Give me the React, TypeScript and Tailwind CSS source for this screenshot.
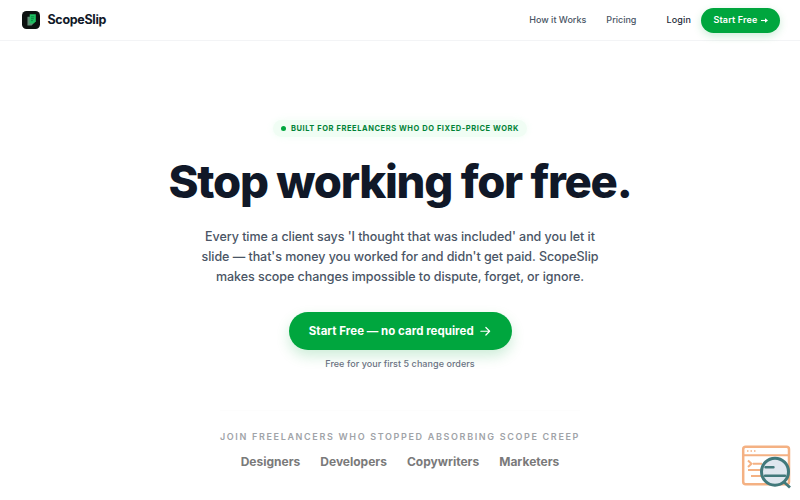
import React from "react";

const audience = ["Designers", "Developers", "Copywriters", "Marketers"];

const Logo = () => {
  return (
    <svg className="h-[18px] w-[18px]" viewBox="0 0 28 28" fill="none">
      <rect width="28" height="28" rx="7" fill="#0c1110" />
      <path d="M8.5 9h9v11L15 22.5H8.5z" fill="#5f8b74" />
      <path d="M12 5h9.5v11l-3 3.5H12z" fill="#1fbf62" />
      <path d="M14 9h5M14 12h4.5M14 15h3" stroke="#08763a" strokeWidth="1.2" />
    </svg>
  );
};

const ScanBadge = () => {
  return (
    <svg className="h-[44px] w-[50px]" viewBox="0 0 50 44" fill="none">
      <rect x="2.2" y="1.8" width="45.8" height="37.5" rx="2.5" fill="white" stroke="#f4b183" strokeWidth="2.5" />
      <path d="M2 10.2h46" stroke="#f4b183" strokeWidth="2" />
      <path d="M6 6h1.5M9.500 6H11M13 6h1.500" stroke="#f4b183" strokeWidth="1.6" />
      <path d="m7 15.500 3.500 3.200L7 22M12 18.700h9M7 25h13M10 31h11" stroke="#f4b183" strokeWidth="2" />
      <path d="m43.500 37.500 5.500 5" stroke="#41797b" strokeWidth="2.8" />
      <circle cx="34" cy="26.700" r="13.500" fill="#dfe7ef" stroke="#41797b" strokeWidth="3" />
      <path d="M24.500 22.200h8M24 30.700h20" stroke="#41797b" strokeWidth="2.4" strokeLinecap="round" />
    </svg>
  );
};

const App = () => {
  return (
    <div className="relative h-[500px] overflow-hidden bg-white font-['Inter',sans-serif] text-gray-900">
      {/* Header */}
      <header className="flex h-[41px] items-center justify-between border-b border-gray-100 pr-5 pl-[22px]">
        <div className="flex items-center gap-[7.5px]">
          <Logo />
          <span className="text-[12.5px] font-bold tracking-[-0.025em]">ScopeSlip</span>
        </div>
        <nav className="flex items-center text-[9px] font-medium text-gray-600">
          <a className="mr-5">How it Works</a>
          <a className="mr-[30px]">Pricing</a>
          <a className="mr-2.5 tracking-[0.15px] text-gray-800">Login</a>
          <a className="flex h-[25px] w-[79px] items-center justify-center rounded-full bg-[#00a63e] font-semibold tracking-[0.16px] text-white shadow-[0_3px_8px_#00a63e33]">
            Start Free
            <svg className="ml-[3px] h-[7px] w-[7px]" viewBox="0 0 7 7" fill="none">
              <path d="M0 3.5h5" stroke="currentColor" strokeWidth="1.1" />
              <path d="M4 1.3 7 3.5 4 5.7z" fill="currentColor" />
            </svg>
          </a>
        </nav>
      </header>

      {/* Hero */}
      <main className="flex flex-col items-center pt-[79px] text-center">
        <div className="flex h-[17px] items-center gap-[5px] rounded-full bg-green-50 px-[7.5px] text-[7.5px] font-bold tracking-[0.57px] text-green-700 shadow-[0_0_7px_#dcfce766]">
          <span className="h-[5px] w-[5px] rounded-full bg-[#00a63e]" />
          BUILT FOR FREELANCERS WHO DO FIXED-PRICE WORK
        </div>
        <h1 className="mt-[21px] text-[45.5px] leading-[47.5px] font-extrabold tracking-[-0.028em] whitespace-nowrap">
          Stop working for free.
        </h1>
        <p className="mt-[21px] text-[12.5px] leading-[20.3px] font-medium tracking-[-0.05px] text-gray-600">
          Every time a client says 'I thought that was included' and you let it
          <br />
          slide — that's money you worked for and didn't get paid. ScopeSlip
          <br />
          makes scope changes impossible to dispute, forget, or ignore.
        </p>
        <a className="mt-[25px] flex h-[37.5px] w-[223px] items-center justify-center gap-[5px] rounded-full bg-[#00a63e] text-[11.5px] font-bold tracking-[0.03px] text-white shadow-[0_6px_14px_#00a63e33]">
          Start Free — no card required
          <svg className="h-[12.5px] w-[12.5px]" viewBox="0 0 20 20" fill="none" stroke="currentColor" strokeWidth="1.9" strokeLinecap="round" strokeLinejoin="round">
            <path d="M3 10h14M11 4l6 6-6 6" />
          </svg>
        </a>
        <p className="mt-[8px] text-[9px] leading-[12.5px] font-medium tracking-[0.06px] text-gray-500">
          Free for your first 5 change orders
        </p>

        {/* Audience */}
        <section className="mt-[40px] flex w-[360px] flex-col items-center border-t border-[#fdfdfd] pt-[20px]">
          <p className="text-[9px] leading-[12.5px] font-semibold tracking-[1.66px] whitespace-nowrap text-[#a0a3a8]">
            JOIN FREELANCERS WHO STOPPED ABSORBING SCOPE CREEP
          </p>
          <div className="mt-[9px] flex justify-center gap-5 text-[12px] leading-[17.5px] font-bold text-[#7a7a7a]">
            {audience.map((name) => (
              <span key={name}>{name}</span>
            ))}
          </div>
        </section>
      </main>

      <div className="absolute top-[445px] left-[741px]">
        <ScanBadge />
      </div>
    </div>
  );
};

export default App;
